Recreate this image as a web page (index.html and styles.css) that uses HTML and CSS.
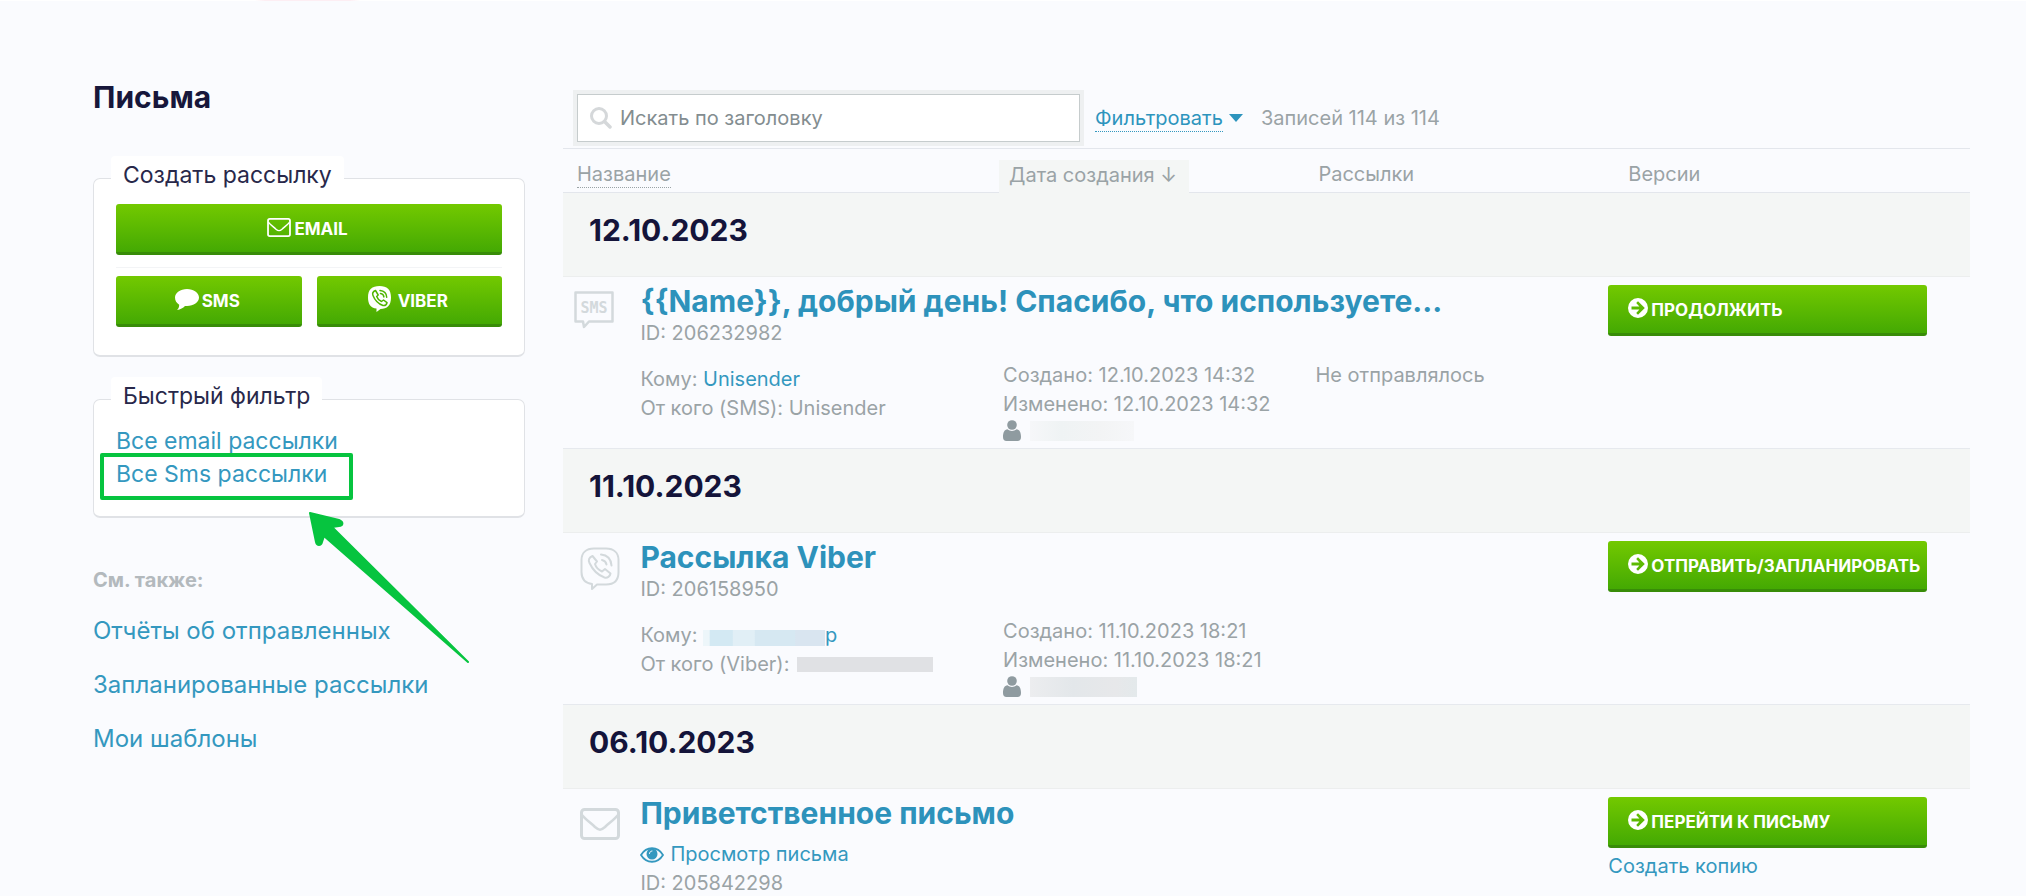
FILE: index.html
```html
<!DOCTYPE html>
<html lang="ru">
<head>
<meta charset="utf-8">
<meta name="viewport" content="width=device-width, initial-scale=1">
<title>Письма</title>
<link rel="stylesheet" href="styles.css">
</head>
<body>
<svg class="sprite" aria-hidden="true">
  <symbol id="i-mail" viewBox="0 0 40 32"><rect x="1.5" y="1.5" width="37" height="29" rx="3" fill="none" stroke="currentColor" stroke-width="3"/><path d="M2 7c4 5 9 8 13 12 4 3.500 6 3.500 10 0 4-4 9-7 13-12" fill="none" stroke="currentColor" stroke-width="2.500"/></symbol>
  <symbol id="i-go" viewBox="0 0 20 20"><path fill="currentColor" fill-rule="evenodd" d="M10 0a10 10 0 1 1 0 20 10 10 0 0 1 0-20zM10 3.200 8.200 5l3.200 3.400H3.500v3.200h7.900L8.200 15l1.800 1.800 6.800-6.800z"/></symbol>
  <symbol id="i-user" viewBox="0 0 18 21"><circle cx="9" cy="5" r="4.800" fill="currentColor"/><path fill="currentColor" d="M4.500 9.300C1.500 9.500 0 12.500 0 17c0 2.500 1.200 4 3.500 4h11c2.300 0 3.500-1.500 3.500-4 0-4.500-1.500-7.500-4.500-7.700-2.700 2.200-6.300 2.200-9 0z"/></symbol>
</svg>
<div class="page">
  <aside class="sidebar">
    <h1 class="sidebar__title">Письма</h1>
    <fieldset class="box">
      <legend class="box__legend">Создать рассылку</legend>
      <div class="create">
        <button class="btn btn--wide" type="button"><svg class="ico-mail" aria-hidden="true"><use href="#i-mail"/></svg><span>EMAIL</span></button>
        <hr class="create__line">
        <button class="btn" type="button"><svg class="ico-chat" viewBox="0 0 24 21" aria-hidden="true"><path fill="currentColor" d="M12 0c6.600 0 12 3.700 12 8.500S18.600 17 12 17l-2-.1C8 19 5.500 20.300 2 21c1.500-1.400 2.200-3 2.200-5.300C1.600 14.200 0 11.500 0 8.500 0 3.700 5.400 0 12 0z"/></svg><span>SMS</span></button>
        <button class="btn" type="button"><svg class="ico-viber" viewBox="0 0 23 26" aria-hidden="true"><path fill="currentColor" d="M11.500 0C19 0 23 3.500 23 11.500S19 23 12.500 23L8.500 26v-3.400C2.500 21.700 0 18 0 11.500 0 3.500 4 0 11.500 0z"/><path fill="none" stroke="#4fb400" stroke-width="1.500" stroke-linejoin="round" stroke-linecap="round" d="M7.500 4.500C5 5.500 4 7 5 9.500c2 5 5.500 8.500 10 10 2 .4 3.500-.8 4-2.800l-3.500-2.700-2 1.500c-2.500-1-4-2.700-4.800-5L10.200 9zM12 4.500c4 .3 6.500 3 6.700 6.800M12.500 7.500c2 .2 3.200 1.500 3.400 3.400"/></svg><span>VIBER</span></button>
      </div>
    </fieldset>
    <fieldset class="box box--filter">
      <legend class="box__legend">Быстрый фильтр</legend>
      <ul class="quick">
        <li><a href="#">Все email рассылки</a></li>
        <li class="quick__marked"><a href="#">Все Sms рассылки</a>
          <svg class="pointer" viewBox="0 0 162 152" aria-hidden="true"><path fill="#06c43f" stroke="#06c43f" stroke-width="2" stroke-linejoin="round" d="M2 1 31 8c5 2 4 6 0 6l-7 1 136 135L16 24l-2 6c-1 4-5 4-6 0z"/></svg>
        </li>
      </ul>
    </fieldset>
    <nav class="also">
      <h2 class="also__title">См. также:</h2>
      <a href="#">Отчёты об отправленных</a>
      <a href="#">Запланированные рассылки</a>
      <a href="#">Мои шаблоны</a>
    </nav>
  </aside>

  <main class="main">
    <div class="toolbar">
      <label class="search">
        <svg class="search__icon" viewBox="0 0 22 22" aria-hidden="true"><circle cx="9" cy="9" r="7.500" fill="none" stroke="currentColor" stroke-width="3"/><path d="m14.500 14.500 5.500 5.500" stroke="currentColor" stroke-width="3.500" stroke-linecap="round"/></svg>
        <input class="search__input" type="text" placeholder="Искать по заголовку" aria-label="Искать по заголовку">
      </label>
      <button class="filter" type="button"><span class="filter__text">Фильтровать</span><svg class="filter__caret" viewBox="0 0 14 8" aria-hidden="true"><path fill="currentColor" d="M0 0h14L7 8z"/></svg></button>
      <span class="count">Записей 114 из 114</span>
    </div>

    <table class="list">
      <colgroup><col class="c-icon"><col class="c-name"><col class="c-date"><col class="c-sent"><col class="c-act"></colgroup>
      <thead>
        <tr>
          <th colspan="2" scope="col" class="h-name"><button class="sort sort--dotted" type="button">Название</button></th>
          <th scope="col" class="h-date"><button class="sort sort--on" type="button">Дата создания ↓</button></th>
          <th scope="col" class="h-sent">Рассылки</th>
          <th scope="col" class="h-act">Версии</th>
        </tr>
      </thead>
      <tbody>
        <tr class="day"><th colspan="5" scope="rowgroup">12.10.2023</th></tr>
        <tr class="top">
          <td rowspan="2" class="icon"><svg class="type type--sms" viewBox="0 0 40 38" aria-hidden="true"><path d="M1.500 1.500h37v29H15l-5 5.500-1-5.500H1.500z" fill="none" stroke="currentColor" stroke-width="2.500" stroke-linejoin="round"/><text x="20" y="21.500" text-anchor="middle" class="type__text">SMS</text></svg></td>
          <td colspan="3"><a class="title" href="#">{{Name}}, добрый день! Спасибо, что используете...</a><div>ID: 206232982</div></td>
          <td rowspan="2" class="act"><button class="btn btn--row" type="button"><svg class="ico-go" aria-hidden="true"><use href="#i-go"/></svg><span>ПРОДОЛЖИТЬ</span></button></td>
        </tr>
        <tr class="info">
          <td class="who"><div>Кому: <a href="#">Unisender</a></div><div>От кого (SMS): Unisender</div></td>
          <td><div>Создано: 12.10.2023 14:32</div><div>Изменено: 12.10.2023 14:32</div><div class="owner"><svg class="ico-user" aria-hidden="true"><use href="#i-user"/></svg><span class="mask mask--pale"></span></div></td>
          <td>Не отправлялось</td>
        </tr>
      </tbody>
      <tbody>
        <tr class="day"><th colspan="5" scope="rowgroup">11.10.2023</th></tr>
        <tr class="top">
          <td rowspan="2" class="icon"><svg class="type type--viber" viewBox="0 0 40 43" aria-hidden="true"><g fill="none" stroke="currentColor" stroke-width="2" stroke-linejoin="round" stroke-linecap="round"><path d="M14 1.500h12C34 1.500 38.500 6 38.500 13v12c0 8-4.500 12.500-12.500 12.500h-9L12 42v-5C5 36 1.500 32 1.500 25V13C1.500 6 6 1.500 14 1.500z"/><path d="M12.500 9C9 10.500 8 13 9.500 16c3.500 7.500 8 12 15 14.500 3 .8 5.500-1 6-4L25 22l-3 2.500c-3.500-1.700-6-4-7-7.500l2-2.500zM21 7.500c6 .5 10 4.500 10.500 11M22 13c2.500.5 4 2 4.500 4.500"/></g></svg></td>
          <td colspan="3"><a class="title" href="#">Рассылка Viber</a><div>ID: 206158950</div></td>
          <td rowspan="2" class="act"><button class="btn btn--row" type="button"><svg class="ico-go" aria-hidden="true"><use href="#i-go"/></svg><span>ОТПРАВИТЬ/ЗАПЛАНИРОВАТЬ</span></button></td>
        </tr>
        <tr class="info">
          <td class="who"><div>Кому: <a href="#"><span class="mask mask--blue"></span>р</a></div><div>От кого (Viber): <span class="mask mask--grey"></span></div></td>
          <td><div>Создано: 11.10.2023 18:21</div><div>Изменено: 11.10.2023 18:21</div><div class="owner"><svg class="ico-user" aria-hidden="true"><use href="#i-user"/></svg><span class="mask mask--mid"></span></div></td>
          <td></td>
        </tr>
      </tbody>
      <tbody>
        <tr class="day"><th colspan="5" scope="rowgroup">06.10.2023</th></tr>
        <tr class="top">
          <td class="icon"><svg class="type type--mail" aria-hidden="true"><use href="#i-mail"/></svg></td>
          <td colspan="3"><a class="title" href="#">Приветственное письмо</a><a class="preview" href="#"><svg class="ico-eye" viewBox="0 0 24 16" aria-hidden="true"><path d="M1 8c5.500-9 16.500-9 22 0-5.500 9-16.500 9-22 0z" fill="none" stroke="currentColor" stroke-width="1.800"/><circle cx="12" cy="7" r="5.500" fill="currentColor"/><path d="M9.500 6.500C9.700 5 10.500 4.200 12 4" fill="none" stroke="#fafbfe" stroke-linecap="round"/></svg>Просмотр письма</a><div>ID: 205842298</div></td>
          <td class="act"><button class="btn btn--row" type="button"><svg class="ico-go" aria-hidden="true"><use href="#i-go"/></svg><span>ПЕРЕЙТИ К ПИСЬМУ</span></button><a class="copy" href="#">Создать копию</a></td>
        </tr>
      </tbody>
    </table>
  </main>
</div>
</body>
</html>
```
FILE: styles.css
```css
*, *::before { box-sizing: border-box; }
body {
  margin: 0;
  background: #fafbfe;
  color: #9aa3a6;
  font: 20px/29px Inter, "Noto Sans", sans-serif;
}
a { color: #3498bf; text-decoration: none; }
button { font-family: inherit; cursor: pointer; }
.sprite { position: absolute; width: 0; height: 0; }

.page {
  display: grid;
  grid-template-columns: 432px minmax(0, 1fr);
  column-gap: 38px;
  height: 100vh;
  overflow: hidden;
  padding: 0 56px 0 93px;
  background: linear-gradient(90deg, #fff 255px, #fdeef3 265px 350px, #fff 360px) top / 100% 1px no-repeat;
}

/* Sidebar */
.sidebar { padding-top: 78px; }
.sidebar__title {
  margin: 0 0 40px;
  color: #17173b;
  font-size: 30px;
  line-height: 38px;
}
.box {
  min-width: 0;
  margin: 0;
  padding: 4px 22px 28px;
  background: #fff;
  border: 1px solid #e0e2e6;
  border-bottom-width: 2px;
  border-radius: 7px;
}
.box__legend {
  margin-left: -5px;
  padding: 0 12px 6px;
  background: #fff;
  color: #28284a;
  font-size: 23px;
  line-height: 38px;
  border-radius: 4px;
}
.create {
  display: grid;
  grid-template-columns: 1fr 1fr;
  column-gap: 15px;
}
.create__line {
  grid-column: 1 / -1;
  width: 100%;
  height: 1px;
  margin: 12px 0 8px;
  border: 0;
  background: #f3f4f6;
}
.btn {
  display: flex;
  align-items: center;
  justify-content: center;
  gap: 3px;
  height: 51px;
  padding: 2px 3px 0 0;
  background: linear-gradient(#73c900, #44a903);
  border: 0;
  border-bottom: 3px solid #388c08;
  border-radius: 3px;
  color: #fff;
  font-size: 17px;
  font-weight: 700;
  white-space: nowrap;
}
.btn svg { margin-bottom: 4px; }
.btn--wide { grid-column: 1 / -1; }
.ico-mail { width: 24px; height: 19px; }
.ico-chat { width: 24px; height: 21px; }
.ico-viber { width: 23px; height: 26px; margin-right: 4px; }
.box--filter { margin-top: 20px; padding: 4px 22px 25px; }
.quick {
  margin: 0;
  padding: 0;
  list-style: none;
  font-size: 23px;
  line-height: 33px;
}
.quick__marked { position: relative; }
.quick__marked::before {
  content: "";
  position: absolute;
  left: -16px;
  top: -5px;
  width: 253px;
  height: 47px;
  border: 4px solid #06c43f;
  border-radius: 2px;
  pointer-events: none;
}
.pointer {
  position: absolute;
  left: 192px;
  top: 54px;
  width: 162px;
  height: 152px;
}
.also { display: grid; padding-top: 48px; font-size: 24px; line-height: 54px; }
.also__title { margin: 0 0 9px; color: #b3b9bd; font-size: 20px; line-height: 29px; }

/* Toolbar */
.toolbar {
  display: flex;
  align-items: center;
  height: 148px;
  padding: 88px 0 0 14px;
}
.search {
  display: flex;
  align-items: center;
  gap: 8px;
  width: 503px;
  height: 48px;
  padding: 0 12px;
  background: #fff;
  border: 1px solid #c6cccd;
  box-shadow: 0 0 0 4px #eef0f1;
}
.search__icon { width: 22px; height: 22px; color: #d5d8da; }
.search__input {
  flex: 1;
  min-width: 0;
  padding: 0;
  border: 0;
  outline: 0;
  background: none;
  color: #4d5659;
  font: inherit;
}
.search__input::placeholder { color: #838d90; opacity: 1; }
.filter {
  display: flex;
  align-items: center;
  gap: 6px;
  margin: 0 18px 0 15px;
  padding: 0;
  background: none;
  border: 0;
  color: #2d94bd;
  font-size: 20px;
}
.filter__text { line-height: 26px; border-bottom: 1px dotted #3498bf; }
.filter__caret { width: 14px; height: 8px; }

/* List */
.list {
  width: 100%;
  table-layout: fixed;
  border-collapse: separate;
  border-spacing: 0;
  border-top: 1px solid #e3e6ec;
}
.c-icon { width: 5.500%; }
.c-name { width: 24.500%; }
.c-date { width: 22.200%; }
.c-sent { width: 22.100%; }
.list td { padding: 0; vertical-align: top; }
.list thead th {
  height: 44px;
  padding-top: 8px;
  padding-right: 0;
  padding-bottom: 0;
  border-bottom: 1px solid #e3e6ec;
  font-weight: 400;
  text-align: left;
}
.list .h-name { padding-left: 14px; }
.list thead .h-date {
  padding: 11px 0 0 14px;
  border-bottom: 0;
  background: linear-gradient(#e3e6ec, #e3e6ec) bottom / 100% 1px no-repeat;
  vertical-align: bottom;
}
.list .h-sent { padding-left: 21px; }
.list .h-act { padding-left: 20px; }
.sort {
  padding: 0;
  background: none;
  border: 0;
  color: inherit;
  font-size: 20px;
}
.sort--dotted { line-height: 26px; border-bottom: 1px dotted #9aa3a6; }
.sort--on {
  display: block;
  height: 33px;
  padding: 0 12px 4px 10px;
  background: #f4f6f5;
  white-space: nowrap;
}
.list .day th {
  height: 84px;
  padding: 0 0 8px 26px;
  background: #f4f6f5;
  border-bottom: 1px solid #eceeee;
  color: #14143a;
  font-size: 30px;
  font-weight: 700;
  text-align: left;
}
.list .top td { height: 76px; padding-top: 6px; }
.title { display: block; font-size: 30px; font-weight: 700; line-height: 36px; color: #2d92bb; }
.list .info td { height: 96px; padding: 8px 0 0 18px; border-bottom: 1px solid #e6e9ee; }
.list .info .who { padding: 12px 0 0; }
.list .top .icon,
.list .top .act { border-bottom: 1px solid #e6e9ee; }
.list .top .icon { padding: 14px 0 0 17px; color: #d3d9dc; }
.type { display: block; }
.type--sms { width: 40px; height: 38px; margin-left: -6px; }
.type__text { fill: currentColor; font: 700 15px "DejaVu Sans Mono", monospace; }
.type--viber { width: 40px; height: 43px; }
.type--mail { width: 40px; height: 32px; margin-top: 5px; }
.list .top .act { padding: 8px 43px 0 0; }
.btn--row { justify-content: flex-start; width: 100%; padding: 2px 0 0 20px; }
.ico-go { width: 20px; height: 20px; }
.copy { display: block; padding-top: 4px; }
.preview { display: flex; align-items: center; gap: 6px; padding-top: 9px; }
.ico-eye { width: 24px; height: 16px; }
.owner { display: flex; align-items: center; gap: 9px; height: 23px; }
.ico-user { width: 18px; height: 21px; color: #8f9ba0; }
.mask { display: inline-block; vertical-align: -4px; }
.mask--pale { width: 104px; height: 20px; background: linear-gradient(90deg, #f6f7f9, #eff3f4 30%, #f3f4f5 70%, #f6f7f9); }
.mask--mid { width: 107px; height: 20px; background: linear-gradient(90deg, #ecedef, #e3e7ea 40%, #e7e8ea 80%, #e3e9eb); }
.mask--blue { width: 122px; height: 16px; background: linear-gradient(90deg, #edf6fa 5%, #d3e9f3 6% 24%, #e1eff6 25% 42%, #d6e8f2 43% 75%, #d9e5f0 76%); }
.mask--grey { width: 136px; height: 15px; margin-left: 2px; vertical-align: -1px; background: #e0e1e4; }
```
